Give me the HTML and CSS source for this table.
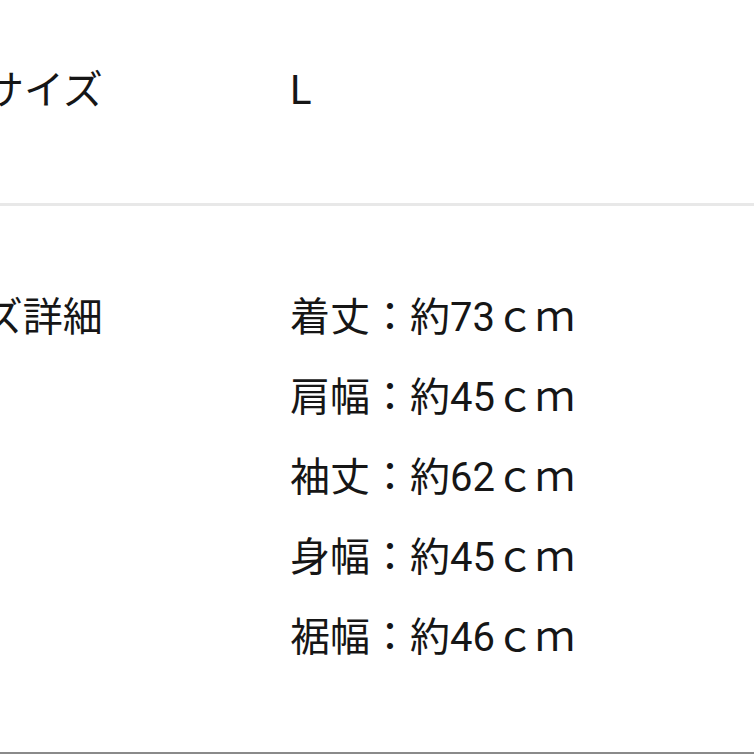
FILE: index.html
```html
<!DOCTYPE html>
<html lang="ja">
<head>
<meta charset="utf-8">
<title>サイズ</title>
<link rel="stylesheet" href="styles.css">
</head>
<body>
<div class="spec">
  <div class="row row-first">
    <div class="label">表記サイズ</div>
    <div class="value"><div class="line">L</div></div>
  </div>
  <div class="row row-detail">
    <div class="label">サイズ詳細</div>
    <div class="value">
      <div class="line">着丈：約73ｃｍ</div>
      <div class="line">肩幅：約45ｃｍ</div>
      <div class="line">袖丈：約62ｃｍ</div>
      <div class="line">身幅：約45ｃｍ</div>
      <div class="line">裾幅：約46ｃｍ</div>
    </div>
  </div>
</div>
</body>
</html>
```
FILE: styles.css
```css
html, body {
  margin: 0;
  padding: 0;
  background: #ffffff;
  overflow: hidden;
}
body {
  width: 754px;
  height: 754px;
  font-family: Roboto, "Noto Sans CJK JP", sans-serif;
  font-size: 40px;
  color: #161616;
}
.spec {
  margin-left: -96px;
  width: 850px;
}
.row {
  display: grid;
  grid-template-columns: 386px 1fr;
  line-height: 80px;
}
.row-first {
  padding-top: 51px;
  padding-bottom: 72px;
  border-bottom: 3px solid #e8e8e8;
}
.row-detail {
  padding-top: 72px;
  padding-bottom: 74px;
  border-bottom: 2px solid #8a8a8a;
}
.label {
  white-space: nowrap;
}
.line {
  white-space: nowrap;
}
```
